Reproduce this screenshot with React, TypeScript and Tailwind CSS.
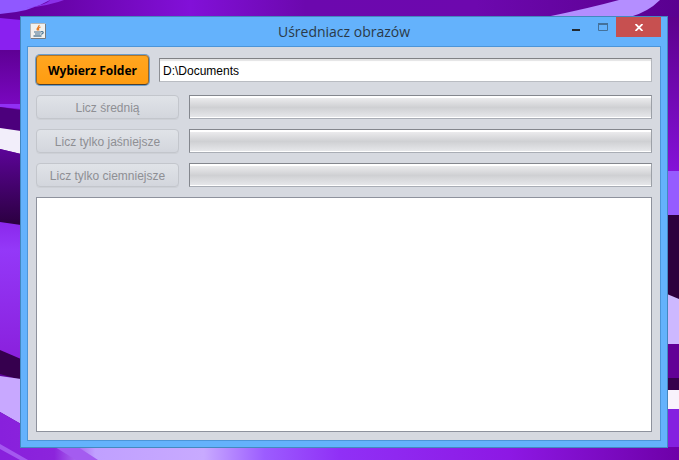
import { useState } from "react";

function Wallpaper() {
  return (
    <svg
      className="absolute inset-0 h-full w-full"
      viewBox="0 0 679 460"
      preserveAspectRatio="none"
      aria-hidden="true"
    >
      <defs>
        <linearGradient id="top" x1="0" x2="1">
          <stop offset="0" stopColor="#5d009a" />
          <stop offset="0.1" stopColor="#6a04ac" />
          <stop offset="0.28" stopColor="#8210d8" />
          <stop offset="0.45" stopColor="#6c08ae" />
          <stop offset="0.7" stopColor="#6d08ae" />
          <stop offset="1" stopColor="#5a0090" />
        </linearGradient>
        <linearGradient id="leftDark" x1="0" x2="0" y1="0" y2="1">
          <stop offset="0" stopColor="#5e0094" />
          <stop offset="1" stopColor="#7c08c4" />
        </linearGradient>
        <linearGradient id="shade" x1="0" x2="0" y1="0" y2="1">
          <stop offset="0" stopColor="#5c0498" />
          <stop offset="1" stopColor="#2b0040" />
        </linearGradient>
        <linearGradient id="leftBright" x1="0" x2="0" y1="0" y2="1">
          <stop offset="0" stopColor="#8a28ec" />
          <stop offset="0.2" stopColor="#9438f8" />
          <stop offset="1" stopColor="#8a20dc" />
        </linearGradient>
        <linearGradient id="rightTop" x1="0" x2="0" y1="0" y2="1">
          <stop offset="0" stopColor="#5d008c" />
          <stop offset="1" stopColor="#8412d8" />
        </linearGradient>
        <linearGradient id="bottom" x1="0" x2="1">
          <stop offset="0" stopColor="#8820dc" />
          <stop offset="0.08" stopColor="#8c24dc" />
          <stop offset="0.14" stopColor="#c0a0ff" />
          <stop offset="0.3" stopColor="#c8aaff" />
          <stop offset="0.39" stopColor="#9c5cff" />
          <stop offset="0.5" stopColor="#9030f6" />
          <stop offset="0.75" stopColor="#8d18e4" />
          <stop offset="1" stopColor="#6e00a8" />
        </linearGradient>
      </defs>
      <rect width="679" height="460" fill="url(#top)" />
      <path d="M0 0H50Q30 12 0 14Z" fill="#9058ff" />
      <path d="M26 8Q46 5 50 0H64Q52 5 26 8Z" fill="#8a30e8" />
      <path d="M546 17Q590 8 619 0H660Q648 12 630 17Z" fill="#b48eff" />
      <path d="M0 18L21 20V51H0Z" fill="#8a20f0" />
      <path d="M0 50H21V110H0Z" fill="url(#leftDark)" />
      <path d="M0 104H21V109L0 107Z" fill="#9030f4" />
      <path d="M0 107L21 110V132L0 128Z" fill="#4c007c" />
      <path d="M0 128L21 131V154L0 149Z" fill="#f2eefa" />
      <path d="M0 149L21 154V225H0Z" fill="url(#shade)" />
      <path d="M0 222L21 225V360L0 352Z" fill="url(#leftBright)" />
      <path d="M0 350L21 359V380L0 374Z" fill="#36004e" />
      <path d="M0 376L21 379V424L0 412Z" fill="#c8a8ff" />
      <rect x="667" y="17" width="12" height="155" fill="url(#rightTop)" />
      <rect x="667" y="171" width="12" height="45" fill="#965cff" />
      <rect x="667" y="215" width="12" height="84" fill="#2e003e" />
      <path d="M667 294L679 299V345H667Z" fill="#cdb8ff" />
      <rect x="667" y="344" width="12" height="38" fill="#620096" />
      <rect x="667" y="378" width="12" height="12" fill="#36004c" />
      <rect x="667" y="390" width="12" height="19" fill="#f8f2fc" />
      <rect x="667" y="409" width="12" height="39" fill="#8420e0" />
      <path d="M0 412L21 424V447H679V460H0Z" fill="url(#bottom)" />
      <path d="M0 444L28 460H20L0 449Z" fill="#a458f0" />
      <path d="M55 447H78L98 460H76Z" fill="#a45cf0" />
    </svg>
  );
}

function JavaIcon() {
  return (
    <svg width="16" height="16" viewBox="0 0 16 16" aria-hidden="true">
      <rect x="0.5" y="0.5" width="15" height="15" rx="1" fill="#f1f1ef" stroke="#b4b5b6" />
      <path d="M1 15.5H15.5V1" fill="none" stroke="#777b80" />
      <path
        d="M9 2C10 4 5.500 4.500 7.500 7.500M10.500 4C8 5 8 6 9 7.500"
        fill="none"
        stroke="#e8791e"
        strokeWidth="1.200"
      />
      <path
        d="M4 9H11M5 11H10.500M11 8.800C14 8 14 10.500 11 11.300"
        fill="none"
        stroke="#46718f"
        strokeWidth="1.100"
      />
      <path d="M3.500 13H11.500" stroke="#46718f" strokeWidth="1.300" />
    </svg>
  );
}

function TitleBar() {
  return (
    <header className="grid h-[29px] grid-cols-[1fr_auto_1fr] items-start">
      <div className="pt-[6px] pl-[9px]">
        <JavaIcon />
      </div>
      <h1 className="pt-[5px] font-['Open_Sans','Noto_Sans',sans-serif] text-[14px] leading-5 text-[#2b3a48]">
        Uśredniacz obrazów
      </h1>
      <div className="flex justify-end pr-[6px]">
        <button type="button" aria-label="Minimalizuj" className="flex h-5 w-[27px] items-center justify-center">
          <svg width="8" height="8" aria-hidden="true">
            <path d="M0 7H8" stroke="#222a31" strokeWidth="2" />
          </svg>
        </button>
        <button type="button" aria-label="Maksymalizuj" className="flex h-5 w-[27px] items-center justify-center">
          <svg width="10" height="8" aria-hidden="true">
            <path d="M0.500 1V7.500H9.500V1" fill="none" stroke="#44719a" />
            <path d="M0 1H10" stroke="#44719a" strokeWidth="2" />
          </svg>
        </button>
        <button
          type="button"
          aria-label="Zamknij"
          className="flex h-5 w-[45px] items-center justify-center bg-[#c75050]"
        >
          <svg width="8" height="7" viewBox="0 0 8 7" aria-hidden="true">
            <path d="M0.500 0L7.500 7M7.500 0L0.500 7" stroke="#fff" strokeWidth="1.800" />
          </svg>
        </button>
      </div>
    </header>
  );
}

function ActionRow({ label }: { label: string }) {
  return (
    <div className="flex h-6 gap-[10px]">
      <button
        type="button"
        disabled
        className="w-[143px] rounded-[4px] border border-[#c3c6cc] bg-linear-to-b from-[#e0e3e8] to-[#d3d6dd] pt-px text-[12px] leading-5 text-[#8e8f94] shadow-[0_1px_0_#cdd0d6]"
      >
        {label}
      </button>
      <div
        role="progressbar"
        aria-label={label}
        aria-valuenow={0}
        className="flex-1 border border-t-[#84878e] border-r-[#9ca0a7] border-b-[#a9adb5] border-l-[#84878e] bg-white pt-[2px] pb-px"
      >
        <div className="h-full bg-linear-to-b from-[#ebebed] via-[#cfd0d3] to-[#e6e7ea]" />
      </div>
    </div>
  );
}

export default function App() {
  const [folder, setFolder] = useState("D:\\Documents");
  const [log, setLog] = useState("");

  return (
    <main className="relative flex h-screen flex-col overflow-hidden pt-4 pr-[11px] pb-3 pl-5 font-['Liberation_Sans',Arial,sans-serif]">
      <Wallpaper />
      <section className="relative flex flex-1 flex-col border border-[#4488bf] bg-[#64b2fc]">
        <TitleBar />
        <div className="mx-[6px] mb-[6px] flex flex-1 flex-col gap-[10px] border border-[#4c95d8] bg-[#d6d9e0] p-2">
          <div className="flex h-[30px] items-center gap-[10px]">
            <button
              type="button"
              className="h-[30px] w-[113px] rounded-[4px] border border-t-[#b47423] border-x-[#96682d] border-b-[#4c4033] bg-linear-to-b from-[#ffa61f] to-[#ff9c10] pt-px font-['Noto_Sans','Open_Sans',sans-serif] text-[12px] font-bold text-black shadow-[0_0_0_1px_#6c9fce]"
            >
              Wybierz Folder
            </button>
            <input
              aria-label="Folder"
              value={folder}
              onChange={(e) => setFolder(e.target.value)}
              className="h-6 min-w-0 flex-1 border border-t-[#808185] border-r-[#b4b7bd] border-b-[#b9bcc2] border-l-[#8d8f94] bg-white px-[3px] pt-[2px] text-[12px] text-black shadow-[inset_0_2px_1px_#e4e4e5] outline-none"
            />
          </div>
          <ActionRow label="Licz średnią" />
          <ActionRow label="Licz tylko jaśniejsze" />
          <ActionRow label="Licz tylko ciemniejsze" />
          <textarea
            aria-label="Dziennik"
            value={log}
            onChange={(e) => setLog(e.target.value)}
            className="min-h-0 w-full flex-1 resize-none border border-[#8e929d] bg-white p-1 text-[12px] outline-none"
          />
        </div>
      </section>
    </main>
  );
}
